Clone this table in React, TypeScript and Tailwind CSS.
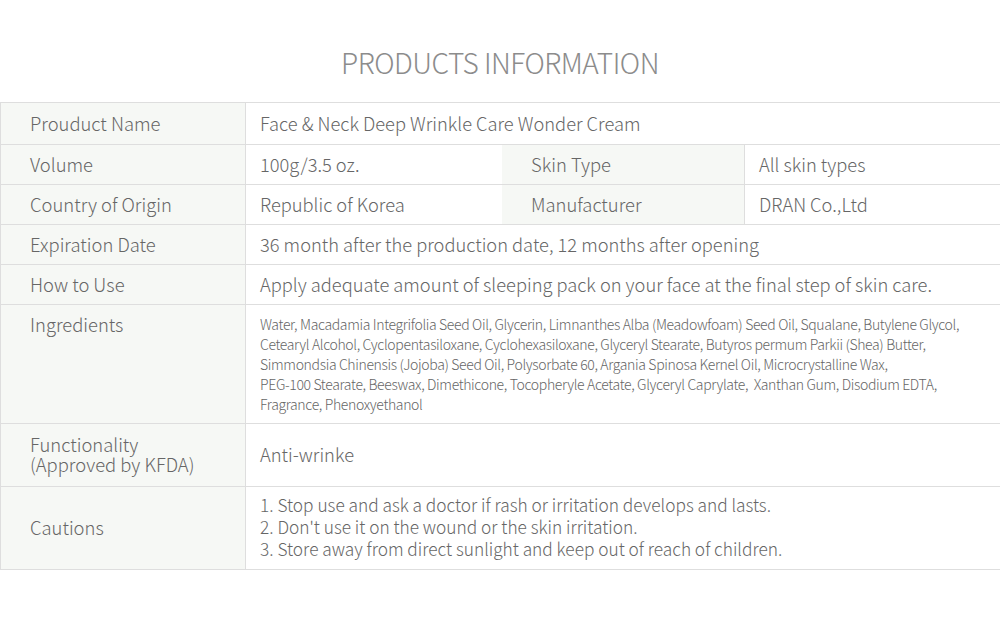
const font = { fontFamily: '"Noto Sans CJK KR", "Noto Sans", sans-serif' };

const Label = ({ children, top = false, className = '' }: { children: React.ReactNode; top?: boolean; className?: string }) => (
  <div
    className={`flex bg-[#f6f8f5] pl-[29px] pr-3 text-[18.4px] text-[#666] border-b border-r border-[#dedede] ${top ? 'items-start pt-[9px]' : 'items-center'} ${className}`}
  >
    {children}
  </div>
);

const Value = ({ children, className = '', size = 'text-[18.3px]' }: { children: React.ReactNode; className?: string; size?: string }) => (
  <div className={`flex items-center pl-[14px] pr-3 ${size} text-[#666] border-b border-r border-[#dedede] ${className}`}>
    {children}
  </div>
);

export default function App() {
  return (
    <div className="w-[1000px] h-[623px] bg-white font-light" style={font}>
      <h1 className="pt-[42px] text-center text-[28px] leading-[40px] tracking-[-0.5px] text-[#8c8c8c]">
        PRODUCTS INFORMATION
      </h1>
      <div className="mt-[20px] grid grid-cols-[245px_256px_243px_256px] w-[1000px] border-t border-l border-[#dedede] leading-[20px]">
        <Label className="h-[42px] pb-[2px]">Prouduct Name</Label>
        <Value className="col-span-3 h-[42px] pb-[2px]">Face &amp; Neck Deep Wrinkle Care Wonder Cream</Value>

        <Label className="h-[40px] pb-[1px]">Volume</Label>
        <div className="flex items-center pl-[14px] pb-[1px] text-[18.3px] text-[#666] border-b border-[#dedede] h-[40px]">100g/3.5 oz.</div>
        <Label className="h-[40px] pb-[1px]">Skin Type</Label>
        <Value className="h-[40px] pb-[1px]">All skin types</Value>

        <Label className="h-[40px] pb-[1px]">Country of Origin</Label>
        <div className="flex items-center pl-[14px] pb-[1px] text-[18.3px] text-[#666] border-b border-[#dedede] h-[40px]">Republic of Korea</div>
        <Label className="h-[40px] pb-[1px]">Manufacturer</Label>
        <Value className="h-[40px] pb-[1px]">DRAN Co.,Ltd</Value>

        <Label className="h-[40px] pb-[1px]">Expiration Date</Label>
        <Value className="col-span-3 h-[40px] pb-[1px]">36 month after the production date, 12 months after opening</Value>

        <Label className="h-[40px] pb-[1px]">How to Use</Label>
        <Value className="col-span-3 h-[40px] pb-[1px]">Apply adequate amount of sleeping pack on your face at the final step of skin care.</Value>

        <Label top className="h-[119px]">Ingredients</Label>
        <div className="col-span-3 h-[119px] pl-[14px] pt-[9px] whitespace-nowrap text-[14px] leading-[20px] tracking-[-0.35px] text-[#666] border-b border-r border-[#dedede]">
          Water, Macadamia Integrifolia Seed Oil, Glycerin, Limnanthes Alba (Meadowfoam) Seed Oil, Squalane, Butylene Glycol,
          <br />
          Cetearyl Alcohol, Cyclopentasiloxane, Cyclohexasiloxane, Glyceryl Stearate, Butyros permum Parkii (Shea) Butter,
          <br />
          Simmondsia Chinensis (Jojoba) Seed Oil, Polysorbate 60, Argania Spinosa Kernel Oil, Microcrystalline Wax,
          <br />
          PEG-100 Stearate, Beeswax, Dimethicone, Tocopheryle Acetate, Glyceryl Caprylate,&nbsp; Xanthan Gum, Disodium EDTA,
          <br />
          Fragrance, Phenoxyethanol
        </div>

        <Label className="h-[63px] pb-[2px]">
          <span>
            Functionality
            <br />
            (Approved by KFDA)
          </span>
        </Label>
        <Value className="col-span-3 h-[63px] pb-[2px]">Anti-wrinke</Value>

        <Label className="h-[83px] pb-[2px]">Cautions</Label>
        <Value className="col-span-3 h-[83px] pb-[2px] leading-[22px]" size="text-[17.3px]">
          <span>
            1. Stop use and ask a doctor if rash or irritation develops and lasts.
            <br />
            2. Don't use it on the wound or the skin irritation.
            <br />
            3. Store away from direct sunlight and keep out of reach of children.
          </span>
        </Value>
      </div>
    </div>
  );
}
